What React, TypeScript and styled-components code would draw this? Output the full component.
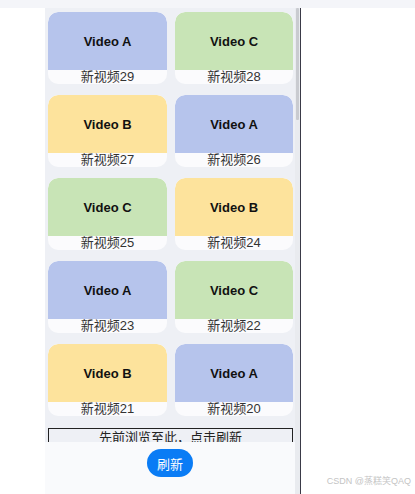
import React from 'react';
import styled, { createGlobalStyle } from 'styled-components';

type Tone = 'blue' | 'green' | 'yellow';

interface VideoItem {
  id: number;
  name: string;
  tone: Tone;
}

const TONES: Record<Tone, string> = {
  blue: '#b6c4ec',
  green: '#c8e4b6',
  yellow: '#fde39c',
};

const VIDEOS: VideoItem[] = [
  { id: 29, name: 'Video A', tone: 'blue' },
  { id: 28, name: 'Video C', tone: 'green' },
  { id: 27, name: 'Video B', tone: 'yellow' },
  { id: 26, name: 'Video A', tone: 'blue' },
  { id: 25, name: 'Video C', tone: 'green' },
  { id: 24, name: 'Video B', tone: 'yellow' },
  { id: 23, name: 'Video A', tone: 'blue' },
  { id: 22, name: 'Video C', tone: 'green' },
  { id: 21, name: 'Video B', tone: 'yellow' },
  { id: 20, name: 'Video A', tone: 'blue' },
];

function App() {
  return (
    <>
      <GlobalStyle />
      <Page>
        <TopBand />
        <Body>
          <Gutter />
          <Phone>
            <Screen>
              <Feed>
                <Grid>
                  {VIDEOS.map(video => (
                    <Card key={video.id}>
                      <Cover tone={video.tone}>{video.name}</Cover>
                      <Caption>新视频{video.id}</Caption>
                    </Card>
                  ))}
                </Grid>
                <Marker>先前浏览至此，点击刷新</Marker>
              </Feed>
              <BottomBar>
                <RefreshButton>刷新</RefreshButton>
              </BottomBar>
            </Screen>
            <ScrollTrack>
              <ScrollThumb />
            </ScrollTrack>
          </Phone>
          <Aside>
            <Watermark>CSDN @蒸糕笑QAQ</Watermark>
          </Aside>
        </Body>
      </Page>
    </>
  );
}

export default App;

const GlobalStyle = createGlobalStyle`
  html, body {
    margin: 0;
    padding: 0;
    background: #ffffff;
  }
  body {
    font-family: "Liberation Sans", "Noto Sans CJK SC", sans-serif;
  }
`;

const Page = styled.div`
  width: 415px;
  height: 494px;
  display: flex;
  flex-direction: column;
  overflow: hidden;
`;

const TopBand = styled.div`
  height: 8px;
  flex: none;
  background: #f4f5f9;
`;

const Body = styled.div`
  flex: 1;
  display: flex;
  min-height: 0;
`;

const Gutter = styled.div`
  width: 45px;
  flex: none;
  background: #ffffff;
`;

const Phone = styled.div`
  width: 255px;
  flex: none;
  display: flex;
  background: #eef0f5;
  border-right: 1px solid #3a3a48;
`;

const Screen = styled.div`
  width: 250px;
  display: flex;
  flex-direction: column;
  min-height: 0;
`;

const Feed = styled.div`
  height: 434px;
  flex: none;
  overflow: hidden;
  padding: 4px 2px 0 3px;
  box-sizing: border-box;
`;

const Grid = styled.div`
  display: grid;
  grid-template-columns: 119px 118px;
  column-gap: 8px;
  row-gap: 11px;
`;

const Card = styled.div`
  height: 72px;
  background: #fbfbfd;
  border-radius: 10px;
  overflow: hidden;
  display: flex;
  flex-direction: column;
`;

const Cover = styled.div<{ tone: Tone }>`
  height: 58px;
  flex: none;
  background: ${p => TONES[p.tone]};
  border-radius: 10px 10px 0 0;
  display: flex;
  align-items: center;
  justify-content: center;
  font-size: 13px;
  font-weight: 700;
  color: #111111;
`;

const Caption = styled.div`
  height: 14px;
  line-height: 14px;
  text-align: center;
  font-size: 13px;
  color: #333333;
`;

const Marker = styled.div`
  margin-top: 12px;
  height: 30px;
  border: 1px solid #222222;
  box-sizing: border-box;
  text-align: center;
  font-size: 13px;
  line-height: 18px;
  color: #222222;
`;

const BottomBar = styled.div`
  flex: 1;
  background: #f9fafc;
  display: flex;
  justify-content: center;
  padding-top: 7px;
`;

const RefreshButton = styled.button`
  width: 46px;
  height: 28px;
  border: none;
  border-radius: 14px;
  background: #0a7cf5;
  color: #ffffff;
  font-family: "Liberation Sans", "Noto Sans CJK SC", sans-serif;
  font-size: 13px;
  padding: 0;
`;

const ScrollTrack = styled.div`
  width: 5px;
  flex: none;
  background: #e9ebef;
  padding-top: 0;
  display: flex;
  justify-content: center;
`;

const ScrollThumb = styled.div`
  width: 3px;
  height: 112px;
  background: #c9cbd0;
  border-radius: 1px;
`;

const Aside = styled.div`
  flex: 1;
  display: flex;
  align-items: flex-end;
  justify-content: flex-end;
  padding: 0 4px 7px 0;
`;

const Watermark = styled.div`
  font-size: 9px;
  color: #c4c4c4;
  font-family: "Liberation Sans", "Noto Sans CJK SC", sans-serif;
`;
